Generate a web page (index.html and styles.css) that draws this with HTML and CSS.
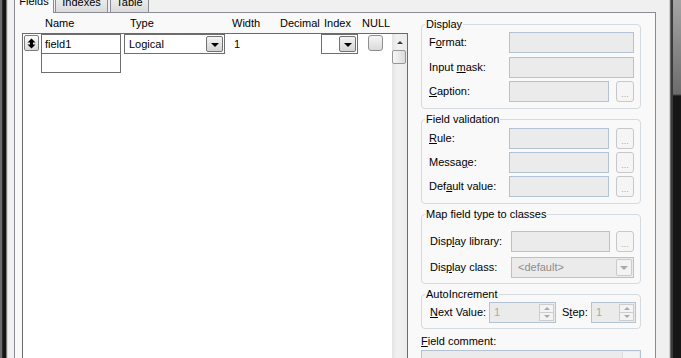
FILE: index.html
```html
<!DOCTYPE html>
<html lang="en">
<head>
  <meta charset="UTF-8" />
  <title>Table Designer</title>
  <link rel="stylesheet" href="styles.css">
</head>
<body>
  <div class="window">
    <div class="frame-left"></div>
    <div class="dialog">
      <div class="tabs">
        <div class="tab active">Fields</div>
        <div class="tab tab-indexes">Indexes</div>
        <div class="tab tab-table">Table</div>
      </div>
      <div class="panel">
        <div class="fields">
          <div class="field-head">
            <span class="h-sel"></span>
            <span class="h-name">Name</span>
            <span class="h-type">Type</span>
            <span class="h-width">Width</span>
            <span class="h-decimal">Decimal</span>
            <span class="h-index">Index</span>
            <span>NULL</span>
          </div>
          <div class="grid">
            <div class="rows">
              <div class="row">
                <div class="row-sel">
                  <svg width="9" height="11" viewBox="0 0 9 11"><path d="M4.5 0.5 L8.5 4.5 H6 V6.5 H8.5 L4.5 10.5 L0.5 6.5 H3 V4.5 H0.5 Z" fill="#000"/></svg>
                </div>
                <div class="cell-name">field1</div>
                <div class="combo combo-type"><span class="val">Logical</span><span class="drop"><i></i></span></div>
                <div class="cell-width">1</div>
                <div class="cell-decimal"></div>
                <div class="combo combo-index"><span class="val"></span><span class="drop"><i></i></span></div>
                <div class="check"></div>
              </div>
              <div class="row row-new">
                <div class="cell-name"></div>
              </div>
            </div>
            <div class="vscroll">
              <div class="arrow-up"></div>
              <div class="thumb"></div>
            </div>
          </div>
        </div>

        <div class="props">
          <div class="group g-display">
            <span class="legend">Display</span>
            <div class="prop-row"><label>F<u>o</u>rmat:</label><div class="box"></div></div>
            <div class="prop-row"><label>Input <u>m</u>ask:</label><div class="box"></div></div>
            <div class="prop-row"><label><u>C</u>aption:</label><div class="box short"></div><div class="ellipsis">...</div></div>
          </div>

          <div class="group g-valid">
            <span class="legend">Field validation</span>
            <div class="prop-row"><label><u>R</u>ule:</label><div class="box short"></div><div class="ellipsis">...</div></div>
            <div class="prop-row"><label>Messa<u>g</u>e:</label><div class="box short"></div><div class="ellipsis">...</div></div>
            <div class="prop-row"><label>Def<u>a</u>ult value:</label><div class="box short"></div><div class="ellipsis">...</div></div>
          </div>

          <div class="group g-map">
            <span class="legend">Map field type to classes</span>
            <div class="prop-row"><label>Disp<u>l</u>ay library:</label><div class="box lib"></div><div class="ellipsis lib-btn">...</div></div>
            <div class="prop-row"><label>Dis<u>p</u>lay class:</label>
              <div class="combo-dis"><span class="val">&lt;default&gt;</span><span class="drop-dis"><i></i></span></div>
            </div>
          </div>

          <div class="group g-auto">
            <span class="legend">AutoIncrement</span>
            <div class="prop-row">
              <label class="next-label"><u>N</u>ext Value:</label>
              <div class="spin spin-next"><span class="val">1</span><span class="spin-btns"><span><i class="up"></i></span><span><i class="down"></i></span></span></div>
              <label class="step-label">S<u>t</u>ep:</label>
              <div class="spin spin-step"><span class="val">1</span><span class="spin-btns"><span><i class="up"></i></span><span><i class="down"></i></span></span></div>
            </div>
          </div>

          <div class="comment-label"><u>F</u>ield comment:</div>
          <div class="comment"><span class="comment-scroll"></span></div>
        </div>
      </div>
    </div>
    <div class="frame-right"></div>
  </div>
</body>
</html>
```

FILE: styles.css
```css
* {
  box-sizing: border-box;
}

body {
  margin: 0;
  font-family: 'Liberation Sans', Arial, sans-serif;
  font-size: 11px;
  line-height: 13px;
  color: #000;
  background: #111;
}

.window {
  display: flex;
  width: 681px;
  height: 358px;
  overflow: hidden;
}

.frame-left {
  width: 8px;
  flex-shrink: 0;
  background: linear-gradient(to right, #6a6a6a 0 2px, #2a2a2a 2px 3px, #141414 3px 6px, #7c7c7c 6px 7px, #d6d6d6 7px);
}

.frame-right {
  width: 12px;
  flex-shrink: 0;
  background:
    linear-gradient(to right, #cfcfcf 0 1px, #6d6d6d 1px 2px, #3a3a3a 2px 4px, transparent 4px),
    linear-gradient(#a5a5a5 0, #6c6c6c 94px, #161616 96px);
}

.dialog {
  flex: 1;
  background: #f0f0f0;
  padding: 0 13px 0 6px;
}

/* tabs, cut off by the top edge */
.tabs {
  display: flex;
  align-items: flex-end;
  height: 20px;
  margin-top: -8px;
}

.tab {
  height: 18px;
  padding-top: 1px;
  text-align: center;
  border: 1px solid #898c95;
  border-bottom: none;
  border-radius: 2px 2px 0 0;
  background: linear-gradient(#f3f3f3, #dadada);
}

.tab.active {
  position: relative;
  width: 40px;
  height: 21px;
  margin-bottom: -1px;
  padding-top: 2px;
  background: #f9f9f9;
}

.tab-indexes {
  width: 53px;
  margin-left: 1px;
}

.tab-table {
  width: 39px;
  margin-left: 2px;
}

.panel {
  display: flex;
  height: 380px;
  border: 1px solid #898c95;
  background: #f9f9f9;
  padding: 0 14px 0 7px;
}

/* field list */
.fields {
  width: 386px;
  flex-shrink: 0;
  display: flex;
  flex-direction: column;
}

.field-head {
  display: flex;
  align-items: center;
  height: 20px;
  padding-left: 1px;
}

.h-sel { width: 22px; }
.h-name { width: 85px; }
.h-type { width: 102px; }
.h-width { width: 48px; }
.h-decimal { width: 44px; }
.h-index { width: 38px; }

.grid {
  flex: 1;
  display: flex;
  border: 1px solid #6b6b6b;
  background: #fff;
}

.rows {
  flex: 1;
}

.row {
  display: flex;
  align-items: flex-start;
}

.row-sel {
  width: 15px;
  height: 16px;
  margin: 1px 2px 0 1px;
  border: 1px solid #7d7d7d;
  border-radius: 2px;
  background: linear-gradient(#fbfbfb, #dadada);
  display: flex;
  align-items: center;
  justify-content: center;
}

.cell-name {
  width: 80px;
  height: 20px;
  margin-right: 3px;
  padding: 0 3px;
  line-height: 18px;
  border: 1px solid #6e6e6e;
  background: #fff;
}

.row-new {
  margin-top: -1px;
}

.row-new .cell-name {
  margin-left: 18px;
}

.combo {
  display: flex;
  align-items: center;
  height: 20px;
  padding: 1px;
  border: 1px solid #6e6e6e;
  background: #fff;
}

.combo .val {
  flex: 1;
  padding-left: 3px;
}

.combo-type { width: 101px; }
.combo-index { width: 37px; }

.drop {
  width: 17px;
  height: 16px;
  border: 1px solid #727272;
  border-radius: 2px;
  background: linear-gradient(#f4f4f4, #d4d4d4);
  display: flex;
  align-items: center;
  justify-content: center;
  padding-top: 2px;
}

.drop i {
  width: 0;
  height: 0;
  border-left: 4px solid transparent;
  border-right: 4px solid transparent;
  border-top: 4px solid #000;
}

.cell-width {
  width: 53px;
  padding-left: 9px;
  line-height: 20px;
}

.cell-decimal {
  width: 43px;
}

.check {
  width: 15px;
  height: 16px;
  margin: 1px 0 0 10px;
  border: 1px solid #8e8f8f;
  border-radius: 3px;
  background: linear-gradient(#f6f6f6, #d9d9d9);
}

.vscroll {
  width: 15px;
  flex-shrink: 0;
  display: flex;
  flex-direction: column;
  align-items: center;
  background: linear-gradient(to right, #e4e4e4, #f1f1f1 35%, #ebebeb);
}

.arrow-up {
  width: 0;
  height: 0;
  margin-top: 7px;
  border-left: 3px solid transparent;
  border-right: 3px solid transparent;
  border-bottom: 3px solid #3c3c3c;
}

.thumb {
  align-self: flex-start;
  width: 14px;
  height: 14px;
  margin-top: 6px;
  border: 1px solid #979797;
  border-radius: 2px;
  background: linear-gradient(to right, #f6f6f6, #dcdcdc);
}

/* property groups */
.props {
  width: 220px;
  flex-shrink: 0;
  margin-left: 13px;
  padding-top: 11px;
}

.group {
  border: 1px solid #d3dae0;
  border-radius: 4px;
  padding: 0 6px 6px 7px;
  margin-bottom: 10px;
}

.legend {
  display: block;
  width: max-content;
  margin: -7px 0 0 -4px;
  padding: 0 1px;
  background: #f9f9f9;
}

.prop-row {
  display: flex;
  align-items: center;
  height: 21px;
  margin-top: 3px;
}

.prop-row label {
  width: 80px;
  flex-shrink: 0;
}

.g-display .prop-row { margin-top: 3.5px; }
.g-display .prop-row:nth-child(2) { margin-top: 1px; }
.g-valid .prop-row:nth-child(2) { margin-top: 2px; }

.g-map { padding-bottom: 5px; }
.g-map .prop-row { margin-top: 5px; }
.g-map .prop-row:nth-child(2) { margin-top: 10px; }
.g-map .prop-row label {
  width: 81px;
  margin-left: 1px;
}

.g-auto { padding-bottom: 5px; margin-bottom: 6px; }
.g-auto .prop-row { margin-top: 1px; }

.box {
  width: 125px;
  height: 21px;
  flex-shrink: 0;
  border: 1px solid #b3c3d3;
  background: #ebebec;
}

.box.short { width: 100px; }
.box.lib { width: 99px; }

.ellipsis {
  width: 18px;
  height: 21px;
  flex-shrink: 0;
  margin-left: 7px;
  padding-top: 6px;
  border: 1px solid #c8c8c8;
  border-radius: 3px;
  background: #f5f5f5;
  color: #a6a6a6;
  font-size: 9px;
  line-height: 12px;
  text-align: center;
}

.ellipsis.lib-btn { margin-left: 6px; }

.combo-dis {
  display: flex;
  align-items: center;
  width: 123px;
  height: 21px;
  padding: 1px;
  border: 1px solid #b3c3d3;
  background: #ebebec;
  color: #8c8c8c;
}

.combo-dis .val {
  flex: 1;
  padding-left: 5px;
}

.drop-dis {
  width: 16px;
  height: 17px;
  border: 1px solid #cbcbcb;
  border-radius: 2px;
  background: #f3f3f3;
  display: flex;
  align-items: center;
  justify-content: center;
}

.drop-dis i {
  width: 0;
  height: 0;
  border-left: 4px solid transparent;
  border-right: 4px solid transparent;
  border-top: 4px solid #a9a9a9;
}

.prop-row label.next-label {
  width: 59px;
  margin-left: 1px;
}

.prop-row label.step-label {
  width: 29px;
  margin-left: 6px;
}

.spin {
  display: flex;
  align-items: center;
  flex-shrink: 0;
  height: 21px;
  padding: 1px 1px 1px 4px;
  border: 1px solid #b3c3d3;
  background: #ebebec;
  color: #a8a8a8;
}

.spin .val { flex: 1; }
.spin-next { width: 67px; }
.spin-step { width: 45px; }

.spin-btns {
  display: flex;
  flex-direction: column;
  width: 15px;
  height: 17px;
}

.spin-btns span {
  flex: 1;
  display: flex;
  align-items: center;
  justify-content: center;
  border: 1px solid #cdcdcd;
  background: #f3f3f3;
}

.spin-btns span + span { border-top: none; }

.spin-btns i {
  width: 0;
  height: 0;
  border-left: 3px solid transparent;
  border-right: 3px solid transparent;
}

.spin-btns i.up { border-bottom: 3px solid #a9a9a9; }
.spin-btns i.down { border-top: 3px solid #a9a9a9; }

.comment-label {
  padding-left: 0;
}

.comment {
  display: flex;
  justify-content: flex-end;
  height: 30px;
  margin-top: 2px;
  padding: 1px;
  border: 1px solid #b3c3d3;
  background: #ebebec;
}

.comment-scroll {
  width: 17px;
  background: #f3f3f3;
  border-left: 1px solid #dedede;
}
```
